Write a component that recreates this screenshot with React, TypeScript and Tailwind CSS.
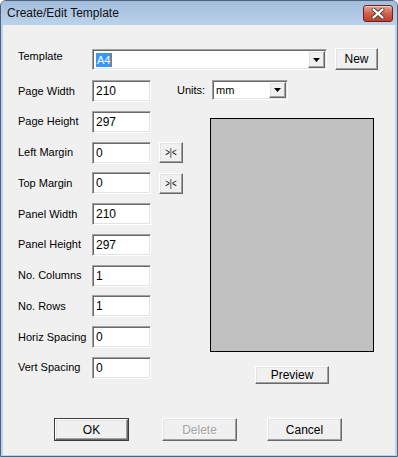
import React from "react";

const raised =
  "bg-[#f0f0f0] border border-t-white border-l-white border-b-[#696969] border-r-[#696969] shadow-[inset_-1px_-1px_0_#a0a0a0,inset_1px_1px_0_#e3e3e3]";
const sunken =
  "bg-white border border-t-[#a0a0a0] border-l-[#a0a0a0] border-b-white border-r-white shadow-[inset_1px_1px_0_#696969,inset_-1px_-1px_0_#e3e3e3]";

function Arrow() {
  return (
    <svg width="7" height="4" viewBox="0 0 7 4">
      <path d="M0 0h7L3.5 4z" fill="#000" />
    </svg>
  );
}

function Combo({ width, children }: { width: string; children: React.ReactNode }) {
  return (
    <div className={`${sunken} ${width} h-full flex p-[1px]`}>
      <div className="flex-1 flex items-center pl-[2px] overflow-hidden">{children}</div>
      <div className={`${raised} w-[17px] h-full flex items-center justify-center`}>
        <Arrow />
      </div>
    </div>
  );
}

const rows: { label: string; value: string; btn?: boolean }[] = [
  { label: "Page Width", value: "210" },
  { label: "Page Height", value: "297" },
  { label: "Left Margin", value: "0", btn: true },
  { label: "Top Margin", value: "0", btn: true },
  { label: "Panel Width", value: "210" },
  { label: "Panel Height", value: "297" },
  { label: "No. Columns", value: "1" },
  { label: "No. Rows", value: "1" },
  { label: "Horiz Spacing", value: "0" },
  { label: "Vert Spacing", value: "0" },
];

export default function App() {
  return (
    <div className="w-[398px] h-[457px] bg-[#bdd4ec] border border-[#50617a] rounded-t-[6px] flex flex-col overflow-hidden font-['Liberation_Sans',Arial,sans-serif] text-black">
      {/* Title bar */}
      <div className="h-[24px] shrink-0 flex items-start justify-between bg-gradient-to-b from-[#a2bddc] to-[#bbd2eb] pl-[6px] pr-[4px]">
        <span className="text-[12px] leading-[24px] text-[#111]">Create/Edit Template</span>
        <div className="mt-[4px] w-[30px] h-[17px] rounded-[3px] border border-[#6a2419] bg-gradient-to-b from-[#e6a595] via-[#d1604c] to-[#c23d28] flex items-center justify-center shadow-[inset_0_1px_0_rgba(255,255,255,0.45)]">
          <svg width="14" height="11" viewBox="0 0 14 11">
            <path d="M2.5 1.5l9 8M11.5 1.5l-9 8" stroke="#4a4a4a" strokeWidth="4" strokeLinecap="round" />
            <path d="M2.5 1.5l9 8M11.5 1.5l-9 8" stroke="#fff" strokeWidth="2.2" strokeLinecap="round" />
          </svg>
        </div>
      </div>

      {/* Client */}
      <div className="flex-1 mx-[2px] mb-[1px] bg-[#f0f0f0] flex flex-col pt-[23px] pl-[15px] text-[11px]">
        {/* Template row */}
        <div className="flex items-start h-[22px]">
          <span className="w-[74px] shrink-0 mt-[2px] leading-[13px]">Template</span>
          <div className="mt-[1px] h-[21px]">
            <Combo width="w-[235px]">
              <span className="bg-[#3399ff] text-white leading-[14px] px-[1px]">A4</span>
              <span className="w-[1px] h-[14px] bg-[#c8651e]" />
            </Combo>
          </div>
          <div className={`${raised} ml-[8px] w-[43px] h-[22px] flex items-center justify-center text-[12px]`}>
            New
          </div>
        </div>

        {/* Lower section */}
        <div className="mt-[10px] flex">
          <div className="w-[159px] shrink-0 flex flex-col gap-[8.75px]">
            {rows.map((r) => (
              <div key={r.label} className="flex items-center h-[22px]">
                <span className="w-[74px] shrink-0 leading-[13px] whitespace-nowrap">{r.label}</span>
                <div className={`${sunken} w-[59px] h-[22px] shrink-0 flex items-center pl-[3px] text-[12px]`}>
                  {r.value}
                </div>
                {r.btn && (
                  <div
                    className={`${raised} ml-[8px] w-[24px] h-[21px] shrink-0 flex items-center justify-center text-[11px]`}
                  >
                    <span className="inline-block scale-x-[0.72] whitespace-nowrap">&gt;|&lt;</span>
                  </div>
                )}
              </div>
            ))}
          </div>

          <div className="flex flex-col">
            <div className="flex items-center h-[20px]">
              <span className="w-[35px] leading-[13px]">Units:</span>
              <Combo width="w-[76px]">
                <span className="leading-[14px]">mm</span>
              </Combo>
            </div>
            <div className="mt-[18px] ml-[33px] w-[164px] h-[234px] bg-[#c0c0c0] border border-black" />
            <div className={`${raised} mt-[14px] ml-[78px] w-[74px] h-[18px] flex items-center justify-center text-[12px]`}>
              Preview
            </div>
          </div>
        </div>

        {/* Bottom buttons */}
        <div className="mt-auto pb-[14px] pl-[36px] flex">
          <div className="w-[75px] h-[23px] border border-[#3c3c3c]">
            <div className={`${raised} w-full h-full flex items-center justify-center text-[12px]`}>OK</div>
          </div>
          <div
            className={`${raised} ml-[33px] w-[75px] h-[23px] flex items-center justify-center text-[12px] text-[#a0a0a0] [text-shadow:1px_1px_0_#fff]`}
          >
            Delete
          </div>
          <div className={`${raised} ml-[30px] w-[75px] h-[23px] flex items-center justify-center text-[12px]`}>
            Cancel
          </div>
        </div>
      </div>
    </div>
  );
}
